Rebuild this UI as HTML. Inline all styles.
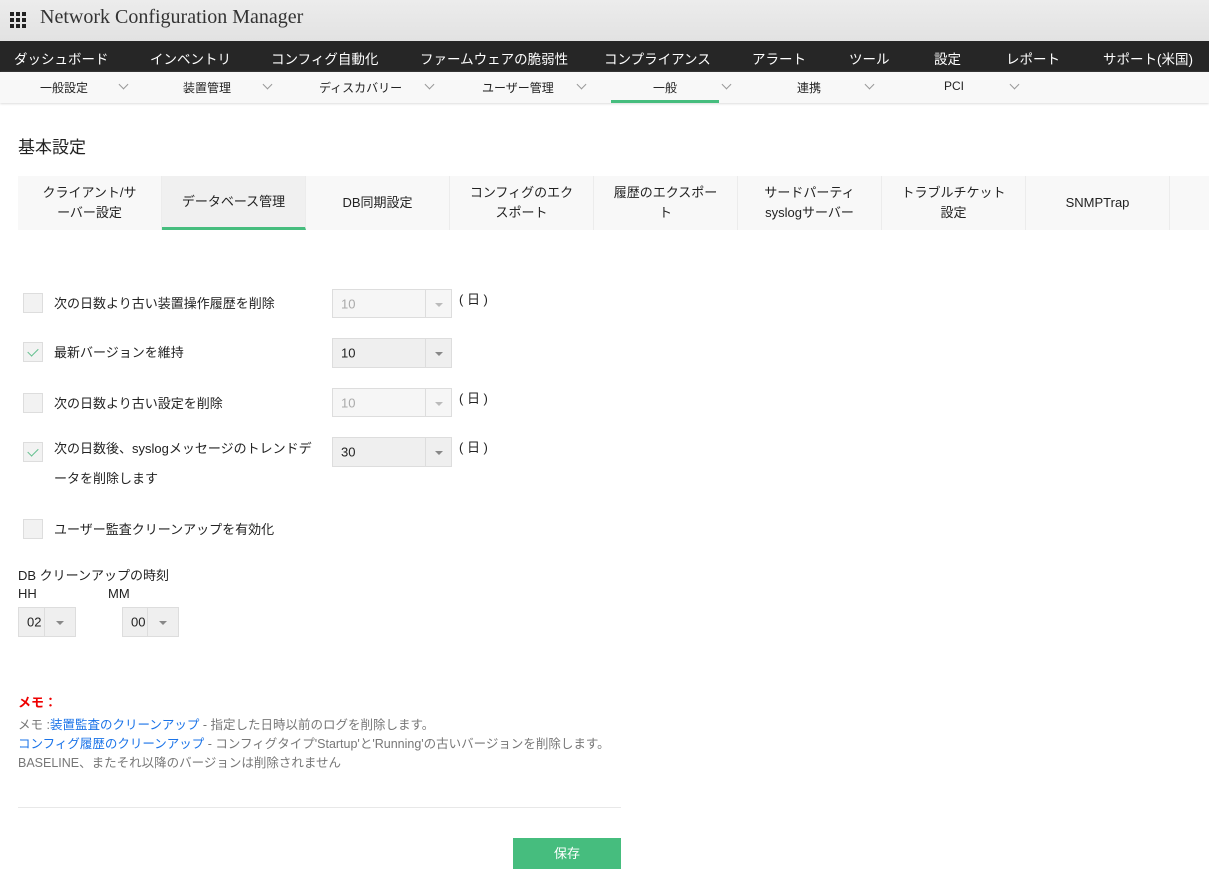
<!DOCTYPE html>
<html><head><meta charset="utf-8"><style>
*{margin:0;padding:0;box-sizing:border-box}
body{width:1209px;height:876px;overflow:hidden;background:#fff;font-family:"Liberation Sans","Noto Sans CJK JP",sans-serif;color:#222;position:relative}
.a{position:absolute;white-space:nowrap}
#hdr{position:absolute;left:0;top:0;width:1209px;height:41px;background:linear-gradient(#ececec,#e2e2e2)}
#nav{position:absolute;left:0;top:41px;width:1209px;height:31px;background:#262626}
#nav span{position:absolute;top:7px;color:#fff;font-size:13.5px}
#sub{position:absolute;left:0;top:72px;width:1209px;height:31px;background:#f8f8f8;box-shadow:0 1px 2px #ddd}
#sub span{position:absolute;top:7px;font-size:12px;color:#222}
#sub i{position:absolute;top:9px;width:7px;height:7px;border-right:1px solid #999;border-bottom:1px solid #999;transform:rotate(45deg)}
.tab{position:absolute;top:176px;height:54px;width:144px;background:#f8f8f8;border-right:1px solid #ececec;font-size:13px;text-align:center;display:flex;align-items:center;justify-content:center;line-height:20px;color:#222}
.cb{position:absolute;left:23px;width:20px;height:20px;background:#f2f2f2;border:1px solid #ddd}
.ck{position:absolute;left:6px;top:3px;width:6px;height:10px;border-right:1.5px solid #5fbf8c;border-bottom:1.5px solid #5fbf8c;transform:rotate(45deg)}
.lbl{position:absolute;left:54px;font-size:13px;color:#222}
.sel{position:absolute;border:1px solid #ddd;background:#efefef;font-size:13px}
.sel.dis{background:#f6f6f6;color:#aaa}
.sel b{position:absolute;top:0;bottom:0;border-left:1px solid #ddd}
.sel b:after{content:"";position:absolute;left:50%;top:50%;margin:-1px 0 0 -4px;border:4px solid transparent;border-top:4px solid #888;border-bottom:0}
.sel.dis b:after{border-top-color:#bbb}
.sel span{position:absolute;left:8px;top:50%;transform:translateY(-50%)}
.day{position:absolute;left:459px;font-size:13px}
</style></head><body>
<div id="hdr">
<svg class="a" style="left:10px;top:12px" width="16" height="16"><g fill="#222"><rect x="0" y="0" width="4" height="4"/><rect x="6" y="0" width="4" height="4"/><rect x="12" y="0" width="4" height="4"/><rect x="0" y="6" width="4" height="4"/><rect x="6" y="6" width="4" height="4"/><rect x="12" y="6" width="4" height="4"/><rect x="0" y="12" width="4" height="4"/><rect x="6" y="12" width="4" height="4"/><rect x="12" y="12" width="4" height="4"/></g></svg>
<div class="a" style="left:40px;top:6px;font-family:'Liberation Serif',serif;font-size:20px;color:#333">Network Configuration Manager</div>
</div>
<div id="nav">
<span style="left:14px">ダッシュボード</span><span style="left:150px">インベントリ</span><span style="left:271px">コンフィグ自動化</span><span style="left:420px">ファームウェアの脆弱性</span><span style="left:604px">コンプライアンス</span><span style="left:752px">アラート</span><span style="left:849px">ツール</span><span style="left:934px">設定</span><span style="left:1006px">レポート</span><span style="left:1103px">サポート(米国)</span>
</div>
<div id="sub">
<span style="left:40px">一般設定</span><i style="left:120px"></i>
<span style="left:183px">装置管理</span><i style="left:264px"></i>
<span style="left:319px">ディスカバリー</span><i style="left:426px"></i>
<span style="left:482px">ユーザー管理</span><i style="left:578px"></i>
<span style="left:653px">一般</span><i style="left:723px"></i>
<span style="left:797px">連携</span><i style="left:866px"></i>
<span style="left:944px">PCI</span><i style="left:1011px"></i>
<div class="a" style="left:611px;top:28px;width:108px;height:3px;background:#46bd7e"></div>
</div>
<div class="a" style="left:18px;top:133px;font-size:17px;color:#222">基本設定</div>
<div class="tab" style="left:18px">クライアント/サ<br>ーバー設定</div>
<div class="tab" style="left:162px;background:#f0f0f0;border-bottom:3px solid #46bd7e">データベース管理</div>
<div class="tab" style="left:306px">DB同期設定</div>
<div class="tab" style="left:450px">コンフィグのエク<br>スポート</div>
<div class="tab" style="left:594px">履歴のエクスポー<br>ト</div>
<div class="tab" style="left:738px">サードパーティ<br>syslogサーバー</div>
<div class="tab" style="left:882px">トラブルチケット<br>設定</div>
<div class="tab" style="left:1026px">SNMPTrap</div>
<div class="tab" style="left:1170px;width:39px;border:0"></div>

<div class="cb" style="top:293px"></div><div class="lbl" style="top:293px">次の日数より古い装置操作履歴を削除</div>
<div class="sel dis" style="left:332px;top:289px;width:120px;height:29px"><span>10</span><b style="left:92px;right:0"></b></div><div class="day" style="top:289px">( 日 )</div>

<div class="cb" style="top:342px"><div class="ck"></div></div><div class="lbl" style="top:342px">最新バージョンを維持</div>
<div class="sel" style="left:332px;top:338px;width:120px;height:30px"><span>10</span><b style="left:92px;right:0"></b></div>

<div class="cb" style="top:393px"></div><div class="lbl" style="top:393px">次の日数より古い設定を削除</div>
<div class="sel dis" style="left:332px;top:388px;width:120px;height:29px"><span>10</span><b style="left:92px;right:0"></b></div><div class="day" style="top:388px">( 日 )</div>

<div class="cb" style="top:442px"><div class="ck"></div></div><div class="lbl" style="top:442px;line-height:30px;margin-top:-8px">次の日数後、syslogメッセージのトレンドデ<br>ータを削除します</div>
<div class="sel" style="left:332px;top:437px;width:120px;height:30px"><span>30</span><b style="left:92px;right:0"></b></div><div class="day" style="top:437px">( 日 )</div>

<div class="cb" style="top:519px"></div><div class="lbl" style="top:519px">ユーザー監査クリーンアップを有効化</div>

<div class="a" style="left:18px;top:565px;font-size:13px">DB クリーンアップの時刻</div>
<div class="a" style="left:18px;top:586px;font-size:13px">HH</div>
<div class="a" style="left:108px;top:586px;font-size:13px">MM</div>
<div class="sel" style="left:18px;top:607px;width:58px;height:30px"><span>02</span><b style="left:25px;right:0"></b></div>
<div class="sel" style="left:122px;top:607px;width:57px;height:30px"><span>00</span><b style="left:24px;right:0"></b></div>

<div class="a" style="left:18px;top:692px;font-size:13px;color:#e00;font-weight:bold">メモ：</div>
<div class="a" style="left:18px;top:714px;font-size:12.5px;color:#777">メモ :<span style="color:#1a73e8">装置監査のクリーンアップ</span> - 指定した日時以前のログを削除します。</div>
<div class="a" style="left:18px;top:733px;font-size:12.5px;color:#777"><span style="color:#1a73e8">コンフィグ履歴のクリーンアップ</span> - コンフィグタイプ'Startup'と'Running'の古いバージョンを削除します。</div>
<div class="a" style="left:18px;top:752px;font-size:12.5px;color:#777">BASELINE、またそれ以降のバージョンは削除されません</div>
<div class="a" style="left:18px;top:807px;width:603px;height:1px;background:#e8e8e8"></div>
<div class="a" style="left:513px;top:838px;width:108px;height:31px;background:#46bd7e;color:#fff;font-size:13px;text-align:center;line-height:31px">保存</div>
</body></html>
